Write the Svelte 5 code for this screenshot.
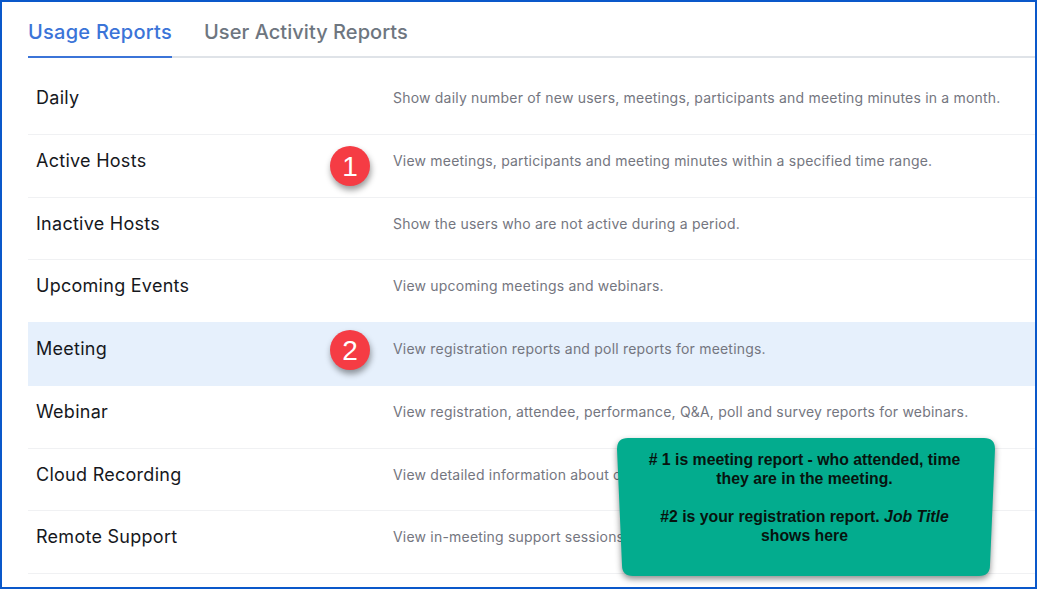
<script>
  const rows = [
    { name: "Daily", desc: "Show daily number of new users, meetings, participants and meeting minutes in a month." },
    { name: "Active Hosts", desc: "View meetings, participants and meeting minutes within a specified time range." },
    { name: "Inactive Hosts", desc: "Show the users who are not active during a period." },
    { name: "Upcoming Events", desc: "View upcoming meetings and webinars." },
    { name: "Meeting", desc: "View registration reports and poll reports for meetings.", active: true },
    { name: "Webinar", desc: "View registration, attendee, performance, Q&A, poll and survey reports for webinars." },
    { name: "Cloud Recording", desc: "View detailed information about c" },
    { name: "Remote Support", desc: "View in-meeting support sessions" },
  ];
</script>

<div class="frame">
  <div class="tabs">
    <div class="tab active">Usage Reports</div>
    <div class="tab">User Activity Reports</div>
  </div>

  <div class="list">
    {#each rows as row}
      <div class="row" class:active={row.active}>
        <div class="name">{row.name}</div>
        <div class="desc">{row.desc}</div>
      </div>
    {/each}
  </div>

  <div class="badge one">1</div>
  <div class="badge two">2</div>

  <div class="note">
    <svg class="note-bg" viewBox="0 0 378 138" width="378" height="138">
      <path d="M11 0H367Q378 0 378 11L373 127Q373 138 362 138H16Q5 138 5 127L0 11Q0 0 11 0Z" fill="#03ac8e" />
    </svg>
    <div class="note-text">
      <p># 1 is meeting report - who attended, time they are in the meeting.</p>
      <p>#2 is your registration report. <em>Job Title</em> shows here</p>
    </div>
  </div>
</div>

<style>
  :global(body) {
    margin: 0;
    background: #fff;
  }

  .frame {
    position: relative;
    box-sizing: border-box;
    width: 1037px;
    height: 589px;
    border: 2px solid #0a58ca;
    padding: 0 0 0 26px;
    overflow: hidden;
    font-family: Inter, "Liberation Sans", sans-serif;
    background: #fff;
  }

  .tabs {
    display: flex;
    gap: 32px;
    height: 54px;
    border-bottom: 2px solid #dfe3e8;
  }

  .tab {
    font-size: 20px;
    font-weight: 500;
    letter-spacing: 0.05px;
    line-height: 60px;
    height: 54px;
    color: #6e7680;
  }

  .tab.active {
    color: #3b74d8;
    letter-spacing: 0.25px;
    border-bottom: 2px solid #3b74d8;
  }

  .list {
    margin-top: 14.4px;
  }

  .row {
    display: grid;
    grid-template-columns: 357px 1fr;
    height: 62.7px;
    box-sizing: border-box;
    padding: 14px 0 0 8px;
    border-bottom: 1px solid #f0f1f3;
    align-items: start;
  }

  .row.active {
    background: #e6f0fc;
    border-bottom-color: #e6f0fc;
    box-shadow: 0 -1px 0 #e6f0fc;
  }

  .name {
    font-size: 18px;
    letter-spacing: 0.27px;
    line-height: 24px;
    color: #16181d;
  }

  .desc {
    font-size: 14px;
    letter-spacing: 0.2px;
    line-height: 20px;
    padding-top: 2px;
    color: #747680;
    white-space: nowrap;
  }

  .badge {
    position: absolute;
    width: 40px;
    height: 40px;
    border-radius: 50%;
    background: #f53c44;
    color: #fff;
    font-family: "Liberation Sans", sans-serif;
    font-size: 28px;
    line-height: 41px;
    text-align: center;
    box-shadow: 1px 4px 6px rgba(0, 0, 0, 0.4);
  }

  .badge.one {
    left: 328px;
    top: 144px;
  }

  .badge.two {
    left: 328px;
    top: 328px;
  }

  .note {
    position: absolute;
    left: 615px;
    top: 436px;
    width: 378px;
    height: 138px;
  }

  .note-bg {
    position: absolute;
    inset: 0;
    filter: drop-shadow(0 3px 3px rgba(0, 0, 0, 0.45));
  }

  .note-text {
    position: relative;
    box-sizing: border-box;
    padding: 12px 33px 0 30px;
    font-family: "Liberation Sans", sans-serif;
    font-weight: 700;
    font-size: 15.8px;
    line-height: 19px;
    color: #07140f;
    text-align: center;
  }

  .note-text p {
    margin: 0 0 19px;
  }
</style>
